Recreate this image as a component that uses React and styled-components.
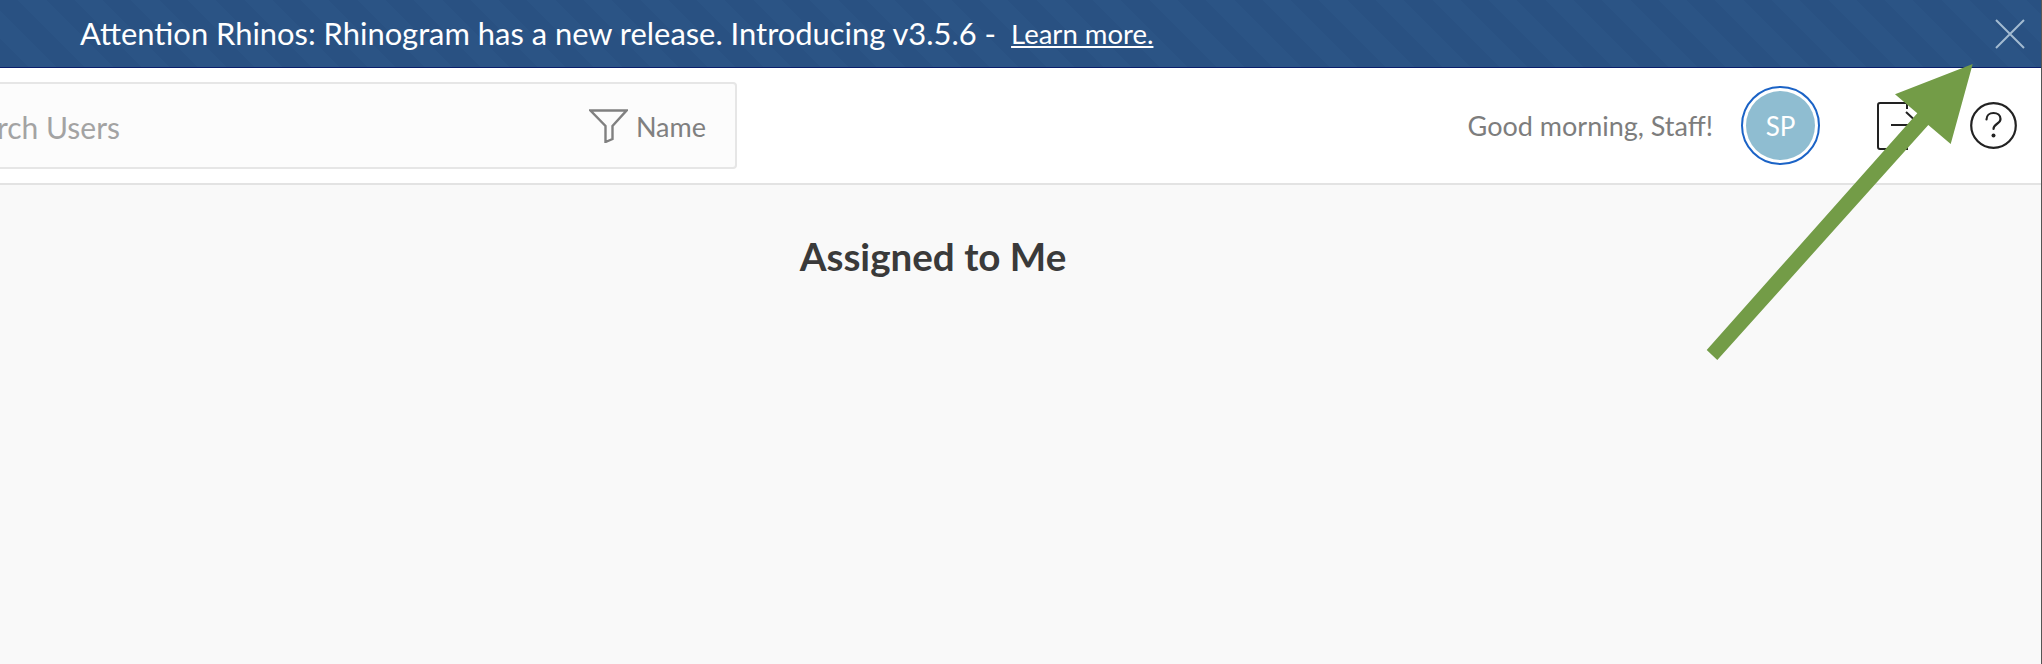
import React from 'react';
import styled, { createGlobalStyle } from 'styled-components';

const GlobalStyle = createGlobalStyle`
  html, body { margin: 0; padding: 0; height: 100%; overflow: hidden; }
  * { box-sizing: border-box; }
`;

const Page = styled.div`
  position: relative;
  height: 100vh;
  display: flex;
  flex-direction: column;
  overflow: hidden;
  background: #f9f9f9;
  border-right: 1px solid #555;
  font-family: Lato, "Open Sans", sans-serif;
`;

const Banner = styled.div`
  height: 68px;
  flex: none;
  display: flex;
  align-items: center;
  padding: 0 16px 0 80px;
  color: #fff;
  border-bottom: 1px solid #0a1f6b;
  background: repeating-linear-gradient(45deg, #295182 0 20px, #2b5485 20px 40px);
`;

const BannerText = styled.span`
  font-size: 30.9px;
  white-space: nowrap;
`;

const LearnMore = styled.a`
  margin-left: 15px;
  font-size: 27.5px;
  color: #fff;
  text-decoration: underline;
  text-underline-offset: 2px;
`;

const CloseButton = styled.button`
  margin-left: auto;
  padding: 0;
  border: 0;
  background: none;
  display: flex;
  color: #a3bbd1;
`;

const Toolbar = styled.header`
  height: 117px;
  flex: none;
  display: flex;
  align-items: center;
  justify-content: space-between;
  padding-right: 24px;
  background: #fff;
  border-bottom: 2px solid #e3e3e3;
`;

const SearchBox = styled.div`
  width: 837px;
  height: 87px;
  margin-left: -100px;
  display: flex;
  align-items: center;
  padding: 0 29px 0 48px;
  background: #fcfcfc;
  border: 2px solid #e6e6e6;
  border-radius: 4px;
`;

const SearchHint = styled.span`
  flex: 1;
  font-size: 30px;
  color: #a3a3a3;
  padding-top: 2px;
`;

const FilterLabel = styled.span`
  margin-left: 8px;
  font-size: 27px;
  color: #808080;
  padding-top: 2px;
`;

const UserArea = styled.div`
  display: flex;
  align-items: center;
`;

const Greeting = styled.span`
  font-size: 27px;
  color: #7d7d7d;
  margin-right: 28px;
`;

const Avatar = styled.div`
  width: 79px;
  height: 79px;
  display: flex;
  align-items: center;
  justify-content: center;
  border-radius: 50%;
  border: 2px solid #1b63c6;
  padding: 3px;
  margin-right: 57px;
`;

const AvatarFace = styled.div`
  width: 100%;
  height: 100%;
  display: flex;
  align-items: center;
  justify-content: center;
  border-radius: 50%;
  background: #8fbdd1;
  color: #fff;
  font-size: 26px;
`;

const IconSlot = styled.span`
  display: flex;
  margin-left: ${(p) => p.$gap || 0}px;
  color: #222;
`;

const Content = styled.main`
  flex: 1;
  display: flex;
  justify-content: center;
  padding: 49px 0 0 0;
`;

const Heading = styled.h1`
  margin: 0 0 0 -175px;
  font-size: 38.6px;
  line-height: 44px;
  font-weight: 700;
  color: #3a3a3a;
`;

const ArrowOverlay = styled.svg`
  position: absolute;
  left: 0;
  top: 0;
  pointer-events: none;
`;

const App = () => {
  return (
    <Page>
      <GlobalStyle />
      <Banner>
        <BannerText>Attention Rhinos: Rhinogram has a new release. Introducing v3.5.6 -</BannerText>
        <LearnMore href="#">Learn more.</LearnMore>
        <CloseButton aria-label="Close">
          <svg width="30" height="30" viewBox="0 0 30 30" fill="none" stroke="currentColor" strokeWidth="2">
            <path d="M1 1l28 28M29 1L1 29" />
          </svg>
        </CloseButton>
      </Banner>
      <Toolbar>
        <SearchBox>
          <SearchHint>Search Users</SearchHint>
          <svg width="39" height="34" viewBox="0 0 39 34" fill="none" stroke="#808080" strokeWidth="2.4">
            <path d="M1.5 1.5h36L23.500 17v13l-7 3V17z" />
          </svg>
          <FilterLabel>Name</FilterLabel>
        </SearchBox>
        <UserArea>
          <Greeting>Good morning, Staff!</Greeting>
          <Avatar>
            <AvatarFace>SP</AvatarFace>
          </Avatar>
          <IconSlot>
            <svg width="46" height="48" viewBox="0 0 46 48" fill="none" stroke="currentColor" strokeWidth="2">
              <path d="M30 7V1H3a2 2 0 0 0-2 2v42a2 2 0 0 0 2 2h27v-6M14 23h30M29 10l14 13-14 13" />
            </svg>
          </IconSlot>
          <IconSlot $gap={47}>
            <svg width="47" height="47" viewBox="0 0 47 47" fill="none" stroke="currentColor" strokeWidth="2.2">
              <circle cx="23.5" cy="23.5" r="22.3" />
              <path d="M16.5 17.5c0-4 3-6.500 7-6.500s7 2.500 7 6c0 5-7 4.500-7 10" strokeLinecap="round" />
              <circle cx="23.5" cy="33.500" r="2" fill="currentColor" stroke="none" />
            </svg>
          </IconSlot>
        </UserArea>
      </Toolbar>
      <Content>
        <Heading>Assigned to Me</Heading>
      </Content>
      <ArrowOverlay width="2042" height="664" viewBox="0 0 2042 664">
        <polygon
          fill="#739c47"
          points="1972.700,64 1895,94.300 1917.300,113.300 1706.700,350 1717.300,360 1928.300,125 1950.700,144"
        />
      </ArrowOverlay>
    </Page>
  );
};

export default App;
